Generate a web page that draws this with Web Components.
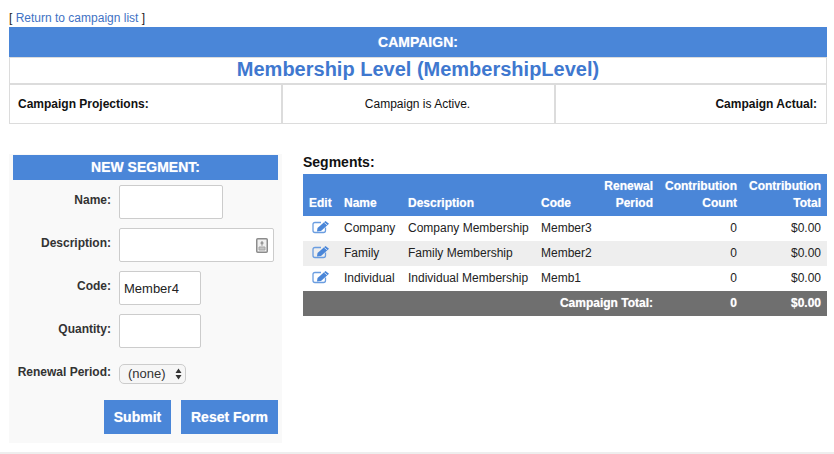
<!DOCTYPE html>
<html>
<head>
<meta charset="utf-8">
<title>Campaign</title>
<style>
  html, body { margin: 0; padding: 0; background: #fff; overflow: hidden; }
  body { font: 12px/14px "Liberation Sans", Arial, sans-serif; color: #111; }
</style>
</head>
<body>
<campaign-page></campaign-page>

<script>
const BLUE = "#4a86d8";
const GLOW = "0 0 1px rgba(255,255,255,.55)";

class CampaignBanner extends HTMLElement {
  constructor() {
    super();
    this.attachShadow({ mode: "open" });
    this.shadowRoot.innerHTML = `
      <style>
        :host { display: block; }
        .head {
          background: ${BLUE};
          color: #fff;
          font-weight: bold;
          font-size: 14px;
          line-height: 30px;
          height: 30px;
          text-align: center;
          text-shadow: ${GLOW};
          border-bottom: 1px solid #dcdcdc;
        }
        .title {
          color: #3f78cf;
          font-size: 20px;
          font-weight: bold;
          line-height: 23px;
          text-align: center;
          border: 1px solid #dcdcdc;
          border-width: 0 1px;
          height: 25px;
        }
        .stats {
          display: grid;
          grid-template-columns: 271px 273px 1fr;
          border: 1px solid #dcdcdc;
          border-top-width: 2px;
          height: 38px;
        }
        .stats div { line-height: 38px; padding: 0 9px; }
        .stats div + div { border-left: 2px solid #dcdcdc; }
        .stats .l { font-weight: bold; padding-left: 8px; }
        .stats .c { text-align: center; padding-right: 11px; }
        .stats .r { text-align: right; font-weight: bold; }
      </style>
      <div class="head">CAMPAIGN:</div>
      <div class="title">Membership Level (MembershipLevel)</div>
      <div class="stats">
        <div class="l">Campaign Projections:</div>
        <div class="c">Campaign is Active.</div>
        <div class="r">Campaign Actual:</div>
      </div>`;
  }
}
customElements.define("campaign-banner", CampaignBanner);

class FormRow extends HTMLElement {
  constructor() {
    super();
    this.attachShadow({ mode: "open" });
    this.shadowRoot.innerHTML = `
      <style>
        :host { display: grid; grid-template-columns: 98px 1fr; column-gap: 8px; }
        label { text-align: right; font-weight: bold; color: #333; padding-top: 8px; white-space: nowrap; }
        :host([tight]) label { padding-top: 1px; }
      </style>
      <label></label>
      <div><slot></slot></div>`;
  }
  connectedCallback() {
    this.shadowRoot.querySelector("label").textContent = this.getAttribute("label");
  }
}
customElements.define("form-row", FormRow);

class SegmentForm extends HTMLElement {
  constructor() {
    super();
    this.attachShadow({ mode: "open" });
    this.shadowRoot.innerHTML = `
      <style>
        :host {
          display: block;
          background: #f9f9f9;
          padding: 1px 4px 9px;
          width: 265px;
        }
        h2 {
          margin: 0 0 5px;
          background: ${BLUE};
          color: #fff;
          font-size: 14px;
          line-height: 25px;
          text-align: center;
          text-shadow: ${GLOW};
        }
        .rows { display: flex; flex-direction: column; gap: 9px; padding-bottom: 16px; }
        input {
          display: block;
          box-sizing: border-box;
          height: 34px;
          width: 82px;
          margin: 0;
          padding: 2px 4px;
          border: 1px solid #ccc;
          border-radius: 2px;
          background: #fff;
          color: #222;
          font: 13px "Liberation Sans", Arial, sans-serif;
        }
        .name { width: 104px; }
        .desc-wrap { position: relative; width: 155px; }
        .desc-wrap input { width: 155px; }
        .desc-wrap svg { position: absolute; left: 137px; top: 10px; }
        .sel-row { margin-top: 7px; }
        .sel-wrap { position: relative; width: 67px; height: 20px; }
        select {
          appearance: none;
          -webkit-appearance: none;
          box-sizing: border-box;
          width: 67px;
          height: 20px;
          margin: 0;
          padding: 0 0 2px 8px;
          border: 1px solid #ccc;
          border-radius: 5px;
          background: #f6f6f6;
          color: #333;
          font: 13px "Liberation Sans", Arial, sans-serif;
        }
        .sel-wrap svg { position: absolute; left: 56px; top: 4px; }
        .buttons { display: flex; justify-content: flex-end; gap: 10px; }
        button {
          height: 34px;
          border: 0;
          padding: 0;
          margin: 0;
          background: ${BLUE};
          color: #fff;
          font: bold 14px "Liberation Sans", Arial, sans-serif;
          text-shadow: ${GLOW};
        }
        .submit { width: 67px; }
        .reset { width: 97px; }
      </style>
      <h2>NEW SEGMENT:</h2>
      <div class="rows">
        <form-row label="Name:"><input class="name"></form-row>
        <form-row label="Description:">
          <div class="desc-wrap">
            <input>
            <svg width="12" height="15" viewBox="0 0 12 15">
              <rect x="0.75" y="0.75" width="10.5" height="13.5" rx="1" fill="#f0f0f0" stroke="#8c8c8c" stroke-width="1.5"/>
              <circle cx="6" cy="5" r="1.5" fill="#8c8c8c"/>
              <path d="M6 3 L6 8 M3 9 H9 V12 H3 Z" stroke="#a5a5a5" fill="#c4c4c4"/>
            </svg>
          </div>
        </form-row>
        <form-row label="Code:"><input value="Member4"></form-row>
        <form-row label="Quantity:"><input></form-row>
        <form-row class="sel-row" label="Renewal Period:" tight>
          <div class="sel-wrap">
            <select><option>(none)</option></select>
            <svg width="7" height="12" viewBox="0 0 7 12">
              <path d="M3.5 0.5 L6.5 5 H0.5 Z M3.5 11.5 L6.5 7 H0.5 Z" fill="#333"/>
            </svg>
          </div>
        </form-row>
      </div>
      <div class="buttons">
        <button class="submit">Submit</button>
        <button class="reset">Reset Form</button>
      </div>`;
  }
}
customElements.define("segment-form", SegmentForm);

class EditIcon extends HTMLElement {
  constructor() {
    super();
    this.attachShadow({ mode: "open" });
    this.shadowRoot.innerHTML = `
      <style>:host { display: block; width: 18px; height: 15px; }
      svg { display: block; }</style>
      <svg width="18" height="15" viewBox="0 0 18 15" fill="none">
        <path d="M9 2.5 H3 Q1 2.5 1 4.5 V10.5 Q1 12.5 3 12.5 H11.5 Q13.5 12.5 13.5 10.5 V7.5" stroke="#6a9de0" stroke-width="1.3"/>
        <path d="M5.5 8 L13.5 1 L17 3.8 L9 11 L5 11.5 Z" fill="#4a86d8"/>
        <path d="M12.3 2.6 L15.2 5" stroke="#fff" stroke-width="0.7"/>
      </svg>`;
  }
}
customElements.define("edit-icon", EditIcon);

const SEGMENTS = [
  ["Company", "Company Membership", "Member3", "", "0", "$0.00"],
  ["Family", "Family Membership", "Member2", "", "0", "$0.00"],
  ["Individual", "Individual Membership", "Memb1", "", "0", "$0.00"],
];

class SegmentsTable extends HTMLElement {
  constructor() {
    super();
    this.attachShadow({ mode: "open" });
    const rows = SEGMENTS.map((s) => `
      <tr>
        <td><edit-icon></edit-icon></td>
        <td>${s[0]}</td><td>${s[1]}</td><td>${s[2]}</td>
        <td class="n">${s[3]}</td><td class="n">${s[4]}</td><td class="n">${s[5]}</td>
      </tr>`).join("");
    this.shadowRoot.innerHTML = `
      <style>
        :host { display: block; width: 524px; }
        h3 { margin: 1px 0 4px; font-size: 14px; line-height: 15px; color: #111; }
        table { width: 524px; table-layout: fixed; border-collapse: collapse; }
        th, td { padding: 0 6px; white-space: nowrap; overflow: visible; }
        thead th {
          background: ${BLUE};
          color: #fff;
          font-weight: bold;
          line-height: 17px;
          height: 42px;
          padding-bottom: 4px;
          box-sizing: border-box;
          vertical-align: bottom;
          text-align: left;
          text-shadow: ${GLOW};
        }
        thead th.n { text-align: right; padding-left: 0; }
        td { height: 25px; box-sizing: border-box; color: #222; padding-bottom: 2px; vertical-align: middle; }
        td edit-icon { margin: 0 0 0 3px; }
        tbody tr:nth-child(even) td { background: #eee; }
        .n { text-align: right; }
        tfoot td {
          background: #6f6f6f;
          color: #fff;
          font-weight: bold;
          text-shadow: ${GLOW};
        }
      </style>
      <h3>Segments:</h3>
      <table>
        <colgroup>
          <col style="width:35px"><col style="width:64px"><col style="width:133px"><col style="width:65px">
          <col style="width:59px"><col style="width:84px"><col style="width:84px">
        </colgroup>
        <thead>
          <tr>
            <th>Edit</th><th>Name</th><th>Description</th><th>Code</th>
            <th class="n">Renewal<br>Period</th>
            <th class="n">Contribution<br>Count</th>
            <th class="n">Contribution<br>Total</th>
          </tr>
        </thead>
        <tbody>${rows}</tbody>
        <tfoot>
          <tr><td colspan="5" class="n">Campaign Total:</td><td class="n">0</td><td class="n">$0.00</td></tr>
        </tfoot>
      </table>`;
  }
}
customElements.define("segments-table", SegmentsTable);

class CampaignPage extends HTMLElement {
  constructor() {
    super();
    this.attachShadow({ mode: "open" });
    this.shadowRoot.innerHTML = `
      <style>
        :host { display: block; height: 454px; box-sizing: border-box; border-bottom: 2px solid #eee; padding: 12px 7px 0 9px; }
        .back { height: 15px; line-height: 13px; color: #222; }
        a { color: #3f72c4; text-decoration: none; }
        .cols { display: flex; margin-top: 30px; }
        .left { padding-right: 21px; }
        .left segment-form { box-sizing: content-box; }
      </style>
      <div class="back">[ <a href="#">Return to campaign list</a> ]</div>
      <campaign-banner></campaign-banner>
      <div class="cols">
        <div class="left"><segment-form></segment-form></div>
        <div class="right"><segments-table></segments-table></div>
      </div>`;
  }
}
customElements.define("campaign-page", CampaignPage);
</script>
</body>
</html>
